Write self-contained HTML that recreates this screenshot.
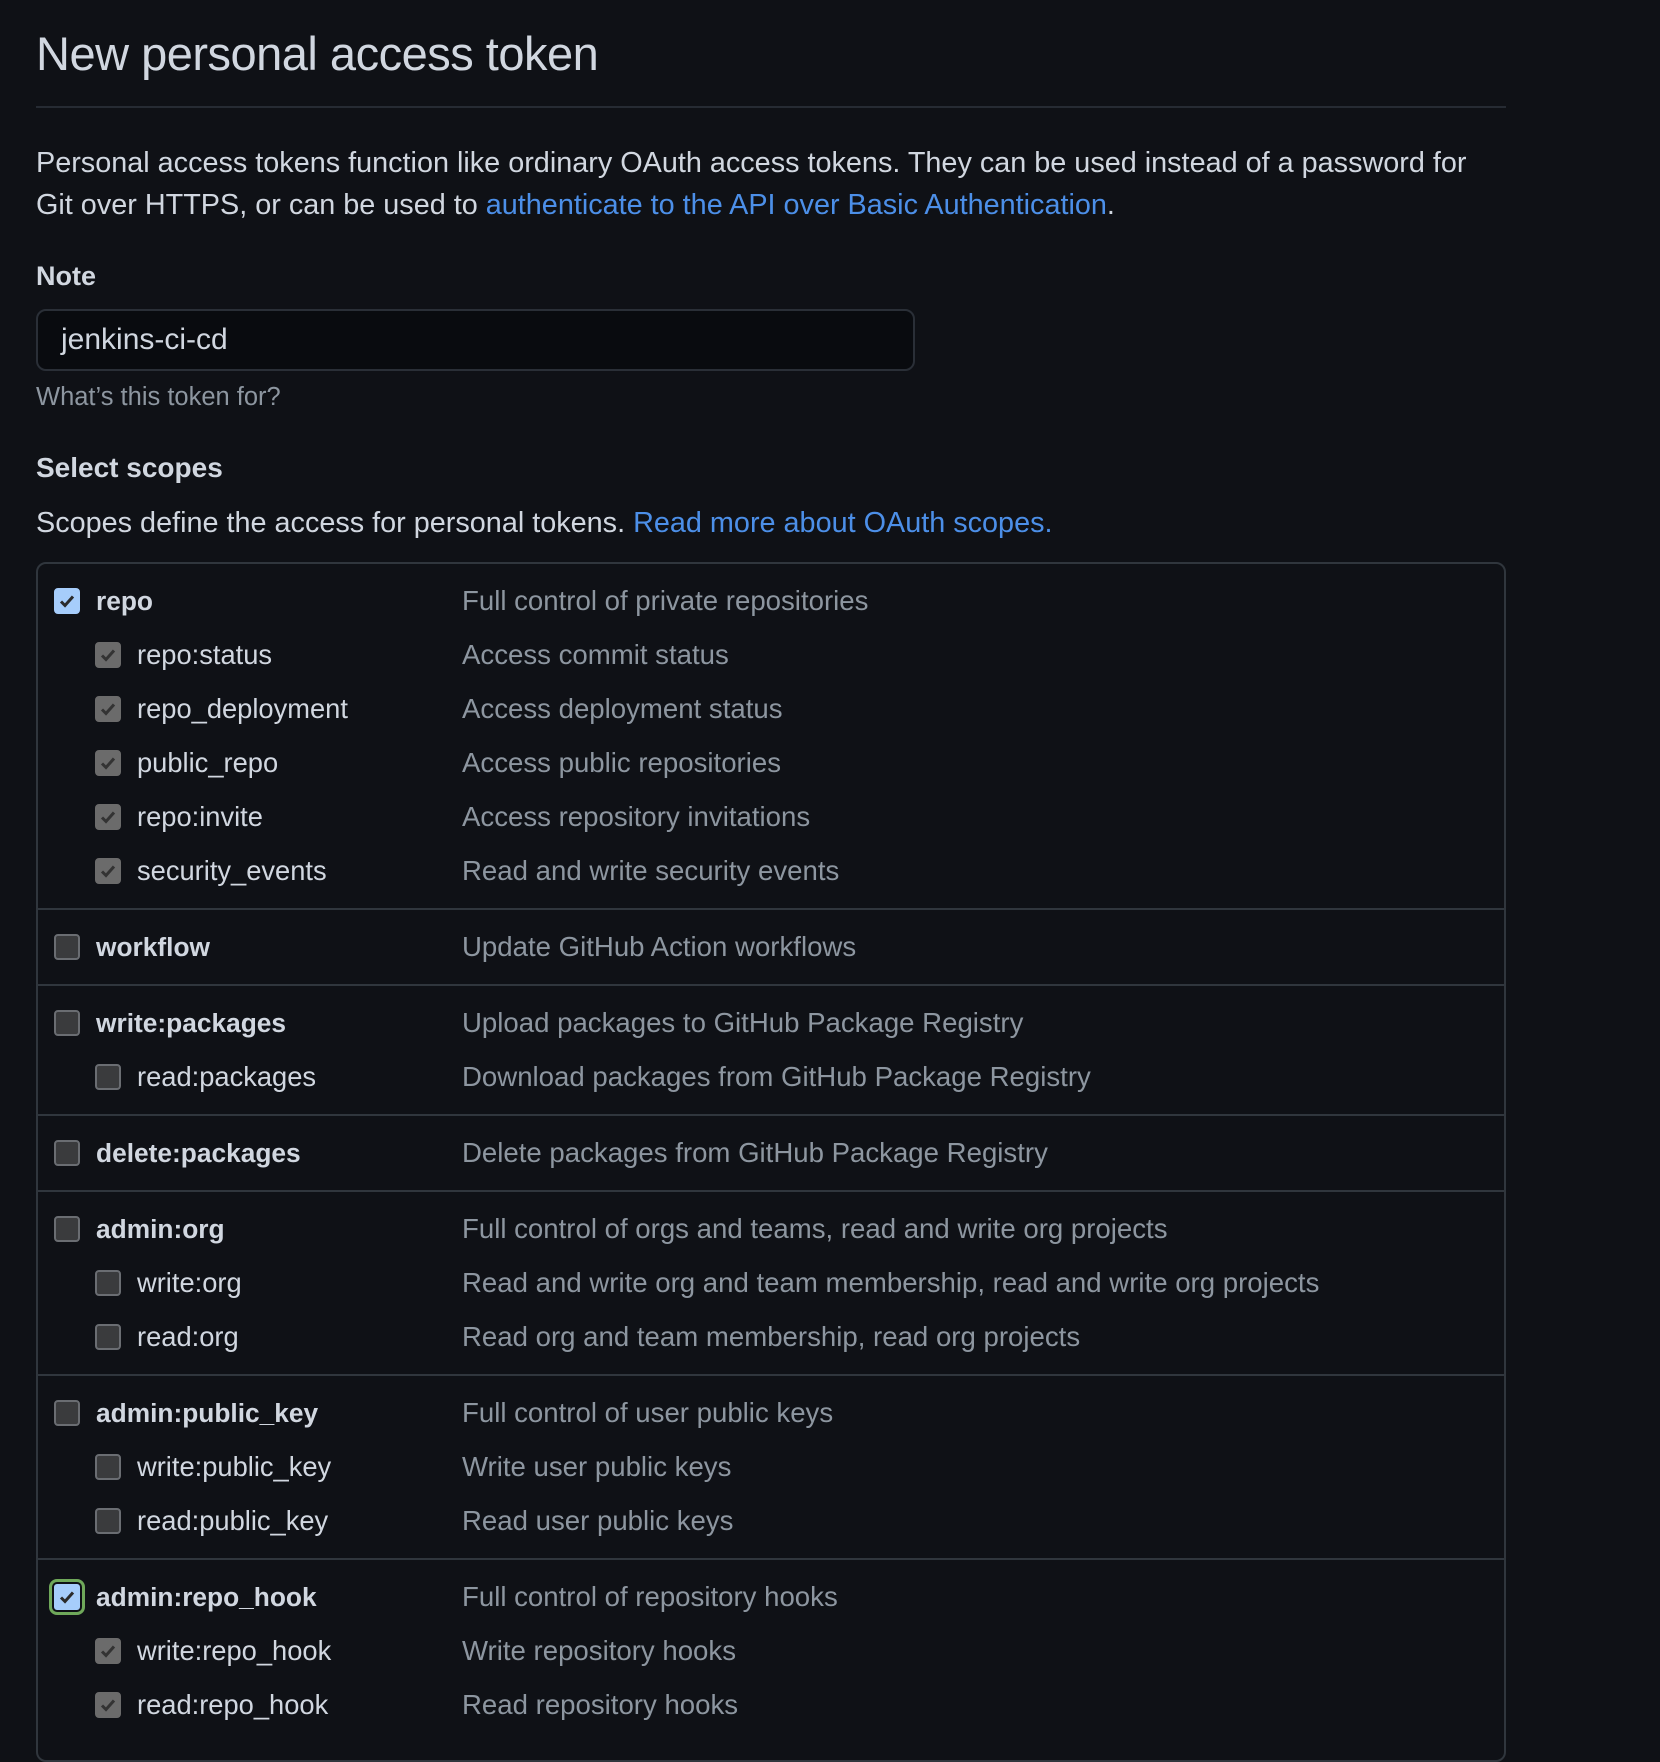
<!DOCTYPE html>
<html><head><meta charset="utf-8"><style>
*{box-sizing:border-box;margin:0;padding:0}
html,body{width:1660px;height:1708px;overflow:hidden;background:#0f1116;font-family:"Liberation Sans",sans-serif;color:#d1d7e0}
.wrap{position:absolute;left:36px;width:1470px;top:0}
h1{position:absolute;top:26px;font-size:47px;font-weight:400;color:#d1d7e0;letter-spacing:-0.5px}
.hr{position:absolute;top:106px;left:0;width:1470px;height:2px;background:#262b33}
.p{position:absolute;top:142px;font-size:28.8px;line-height:42px;color:#d1d7e0;width:1520px;white-space:nowrap}
a{color:#4c8fe8;text-decoration:none}
.lbl{position:absolute;font-size:27px;font-weight:bold;color:#d1d7e0}
.inp{position:absolute;top:309px;left:0;width:879px;height:62px;background:#090b0f;border:2px solid #2a2f37;border-radius:10px;font-size:30px;line-height:58px;padding:0 0 0 23px;color:#d1d7e0}
.hint{position:absolute;top:383px;font-size:25.5px;color:#8d96a0}
.box{position:absolute;top:562px;left:0;width:1470px;height:1200px;border:2px solid #30363d;border-radius:10px}
.grp{border-bottom:2px solid #30363d;padding:10px 0 10px}
.row{position:relative;height:54px;line-height:54px}
.cb{position:absolute;top:14px;width:26px;height:26px;border-radius:4px;background:#3a3b3d;border:2px solid #6a6d72}
.cb.p1{left:16px}.cb.c1{left:57px}
.cb.on{background:#a6cdfb;border-color:#a6cdfb}
.cb.dis{background:#6b6b6b;border-color:#6b6b6b}
.cb svg{position:absolute;left:2px;top:2px}
.cb.foc{outline:3px solid #6fa85a;outline-offset:2px;border-radius:3px}
.name{position:absolute;top:0;font-size:27.3px;color:#d1d7e0}
.name.b{left:58px;font-weight:bold;font-size:26.3px}
.name.s{left:99px}
.desc{position:absolute;left:424px;top:0;font-size:27.6px;color:#8d96a0}
</style></head><body>
<div class="wrap">
<h1>New personal access token</h1>
<div class="hr"></div>
<div class="p">Personal access tokens function like ordinary OAuth access tokens. They can be used instead of a password for<br>Git over HTTPS, or can be used to <a>authenticate to the API over Basic Authentication</a>.</div>
<div class="lbl" style="top:261px">Note</div>
<div class="inp">jenkins-ci-cd</div>
<div class="hint">What’s this token for?</div>
<div class="lbl" style="top:452px;font-size:28px">Select scopes</div>
<div class="p" style="top:502px">Scopes define the access for personal tokens. <a>Read more about OAuth scopes.</a></div>
<div class="box">
<div class="grp">
<div class="row"><span class="cb p1 on"><svg width="18" height="18" viewBox="0 0 18 18"><path d="M3 9.5l4 4 8-9" fill="none" stroke="#2b2b2b" stroke-width="3"/></svg></span><span class="name b">repo</span><span class="desc">Full control of private repositories</span></div>
<div class="row"><span class="cb c1 dis"><svg width="18" height="18" viewBox="0 0 18 18"><path d="M3 9.5l4 4 8-9" fill="none" stroke="#333" stroke-width="3"/></svg></span><span class="name s">repo:status</span><span class="desc">Access commit status</span></div>
<div class="row"><span class="cb c1 dis"><svg width="18" height="18" viewBox="0 0 18 18"><path d="M3 9.5l4 4 8-9" fill="none" stroke="#333" stroke-width="3"/></svg></span><span class="name s">repo_deployment</span><span class="desc">Access deployment status</span></div>
<div class="row"><span class="cb c1 dis"><svg width="18" height="18" viewBox="0 0 18 18"><path d="M3 9.5l4 4 8-9" fill="none" stroke="#333" stroke-width="3"/></svg></span><span class="name s">public_repo</span><span class="desc">Access public repositories</span></div>
<div class="row"><span class="cb c1 dis"><svg width="18" height="18" viewBox="0 0 18 18"><path d="M3 9.5l4 4 8-9" fill="none" stroke="#333" stroke-width="3"/></svg></span><span class="name s">repo:invite</span><span class="desc">Access repository invitations</span></div>
<div class="row"><span class="cb c1 dis"><svg width="18" height="18" viewBox="0 0 18 18"><path d="M3 9.5l4 4 8-9" fill="none" stroke="#333" stroke-width="3"/></svg></span><span class="name s">security_events</span><span class="desc">Read and write security events</span></div>
</div>
<div class="grp">
<div class="row"><span class="cb p1"></span><span class="name b">workflow</span><span class="desc">Update GitHub Action workflows</span></div>
</div>
<div class="grp">
<div class="row"><span class="cb p1"></span><span class="name b">write:packages</span><span class="desc">Upload packages to GitHub Package Registry</span></div>
<div class="row"><span class="cb c1"></span><span class="name s">read:packages</span><span class="desc">Download packages from GitHub Package Registry</span></div>
</div>
<div class="grp">
<div class="row"><span class="cb p1"></span><span class="name b">delete:packages</span><span class="desc">Delete packages from GitHub Package Registry</span></div>
</div>
<div class="grp">
<div class="row"><span class="cb p1"></span><span class="name b">admin:org</span><span class="desc">Full control of orgs and teams, read and write org projects</span></div>
<div class="row"><span class="cb c1"></span><span class="name s">write:org</span><span class="desc">Read and write org and team membership, read and write org projects</span></div>
<div class="row"><span class="cb c1"></span><span class="name s">read:org</span><span class="desc">Read org and team membership, read org projects</span></div>
</div>
<div class="grp">
<div class="row"><span class="cb p1"></span><span class="name b">admin:public_key</span><span class="desc">Full control of user public keys</span></div>
<div class="row"><span class="cb c1"></span><span class="name s">write:public_key</span><span class="desc">Write user public keys</span></div>
<div class="row"><span class="cb c1"></span><span class="name s">read:public_key</span><span class="desc">Read user public keys</span></div>
</div>
<div class="grp" style="border:none">
<div class="row"><span class="cb p1 on foc"><svg width="18" height="18" viewBox="0 0 18 18"><path d="M3 9.5l4 4 8-9" fill="none" stroke="#2b2b2b" stroke-width="3"/></svg></span><span class="name b">admin:repo_hook</span><span class="desc">Full control of repository hooks</span></div>
<div class="row"><span class="cb c1 dis"><svg width="18" height="18" viewBox="0 0 18 18"><path d="M3 9.5l4 4 8-9" fill="none" stroke="#333" stroke-width="3"/></svg></span><span class="name s">write:repo_hook</span><span class="desc">Write repository hooks</span></div>
<div class="row"><span class="cb c1 dis"><svg width="18" height="18" viewBox="0 0 18 18"><path d="M3 9.5l4 4 8-9" fill="none" stroke="#333" stroke-width="3"/></svg></span><span class="name s">read:repo_hook</span><span class="desc">Read repository hooks</span></div>
</div>
</div>
</div>
</body></html>
